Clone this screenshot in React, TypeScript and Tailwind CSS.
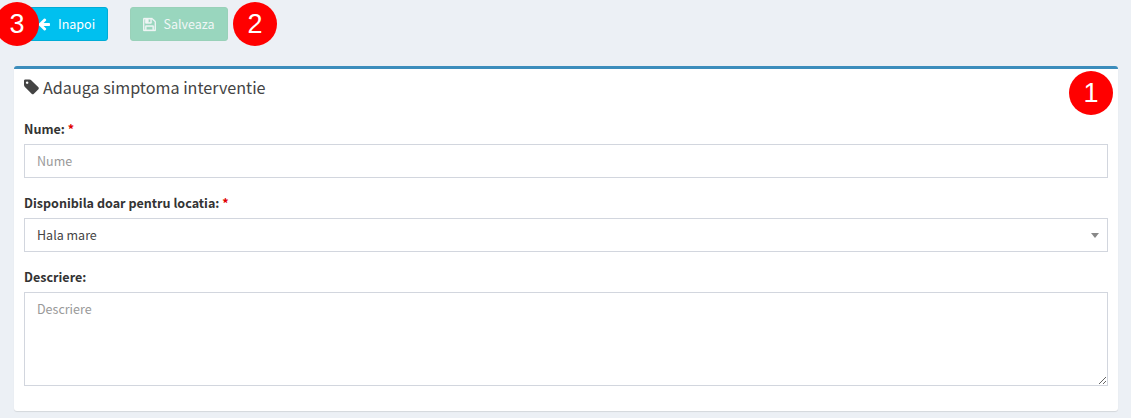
import type { ReactNode } from "react";
import clsx from "clsx";

const icons = {
  back: "M1664 896v128q0 53-32.500 90.500t-84.500 37.500h-704l293 294q38 36 38 90t-38 90l-75 76q-37 37-90 37-52 0-91-37l-651-652q-37-37-37-90 0-52 37-91l651-650q38-38 91-38 52 0 90 38l75 74q38 38 38 91t-38 91l-293 293h704q52 0 84.500 37.500t32.500 90.500z",
  save: "M512 1536h768v-384h-768v384zm896 0h128v-896q0-14-10-38.500t-20-34.500l-281-281q-10-10-34-20t-39-10v416q0 40-28 68t-68 28h-576q-40 0-68-28t-28-68v-416h-128v1280h128v-416q0-40 28-68t68-28h832q40 0 68 28t28 68v416zm-384-928v-320q0-13-9.500-22.500t-22.500-9.500h-192q-13 0-22.500 9.500t-9.500 22.500v320q0 13 9.500 22.500t22.500 9.500h192q13 0 22.500-9.500t9.500-22.500zm640 32v928q0 40-28 68t-68 28h-1344q-40 0-68-28t-28-68v-1344q0-40 28-68t68-28h928q40 0 88 20t76 48l280 280q28 28 48 76t20 88z",
  tag: "M576 448q0-53-37.500-90.500t-90.500-37.500-90.500 37.500-37.500 90.500 37.500 90.500 90.500 37.500 90.500-37.500 37.500-90.500zm1067 576q0 53-37 90l-491 492q-39 37-91 37-53 0-90-37l-715-716q-38-37-64.500-101t-26.500-117v-416q0-52 38-90t90-38h416q53 0 117 26.500t102 64.500l715 714q37 39 37 91z",
};

function Icon({ name, className }: { name: keyof typeof icons; className: string }) {
  return (
    <svg viewBox="128 0 1536 1792" fill="currentColor" className={clsx("shrink-0", className)}>
      <path d={icons[name]} stroke="currentColor" strokeWidth={name === "save" ? 50 : 0} />
    </svg>
  );
}

function Marker({ value, className }: { value: number; className: string }) {
  return (
    <span
      className={clsx(
        "absolute flex size-11 items-center justify-center rounded-full bg-[#ff0000] font-['Liberation_Sans',sans-serif] text-[27px] leading-none text-white",
        className,
      )}
    >
      {value}
    </span>
  );
}

function Field({ label, required, children }: { label: string; required?: boolean; children: ReactNode }) {
  return (
    <div className="mb-[15px] flex flex-col">
      <label className="mb-[5px] text-[12.55px] leading-5 font-bold text-[#333]">
        {label} {required && <span className="text-[#e00000]">*</span>}
      </label>
      {children}
    </div>
  );
}

export default function App() {
  return (
    <div className="relative h-[418px] overflow-hidden bg-[#ecf0f5] pt-[7px] pr-[13px] pl-[14px] font-['Noto_Sans_CJK_SC',sans-serif] text-[12.5px] leading-5 text-[#333]">
      <div className="flex gap-[22px] pl-[11px]">
        <button type="button" className="flex h-[34px] w-[83px] items-center rounded-[3px] border border-[#00acd6] bg-[#00c0ef] pl-3 text-white">
          <Icon name="back" className="mr-2 h-[14px] w-3" />
          Inapoi
        </button>
        <button type="button" disabled className="flex h-[34px] w-[98px] items-center rounded-[3px] border border-[#99d1b9] bg-[#99d6be] pl-3 text-[#f0f6f6]">
          <Icon name="save" className="mr-[7.5px] h-[15px] w-[13px]" />
          Salveaza
        </button>
      </div>

      <section className="mt-[25px] h-[345px] rounded-[3px] border-t-[3px] border-[#3c8dbc] bg-white px-[10px] shadow-[0_1px_1px_rgba(0,0,0,0.1)]">
        <header className="flex h-10 items-start pt-[8px] text-[#444]">
          <Icon name="tag" className="mt-px mr-1 h-[18px] w-[15px]" />
          <h3 className="text-[16.15px] leading-5">Adauga simptoma interventie</h3>
        </header>
        <form className="pt-[10px]">
          <Field label="Nume:" required>
            <input
              type="text"
              placeholder="Nume"
              className="h-[34px] border border-[#d2d6de] bg-white px-3 pt-[5px] pb-[7px] leading-5 placeholder:text-[#999] focus:outline-none"
            />
          </Field>
          <Field label="Disponibila doar pentru locatia:" required>
            <button type="button" className="flex h-[34px] items-center justify-between border border-[#d2d6de] bg-white pr-2 pl-3 text-[#444]">
              Hala mare
              <span className="border-x-4 border-t-[5px] border-x-transparent border-t-[#888]" />
            </button>
          </Field>
          <Field label="Descriere:">
            <textarea
              placeholder="Descriere"
              className="h-[94px] resize border border-[#d2d6de] bg-white px-3 py-[6px] leading-5 placeholder:text-[#999] focus:outline-none"
            />
          </Field>
        </form>
      </section>

      <Marker value={3} className="top-[2px] -left-[5px]" />
      <Marker value={2} className="top-[2px] left-[233px]" />
      <Marker value={1} className="top-[71px] left-[1069px]" />
    </div>
  );
}
